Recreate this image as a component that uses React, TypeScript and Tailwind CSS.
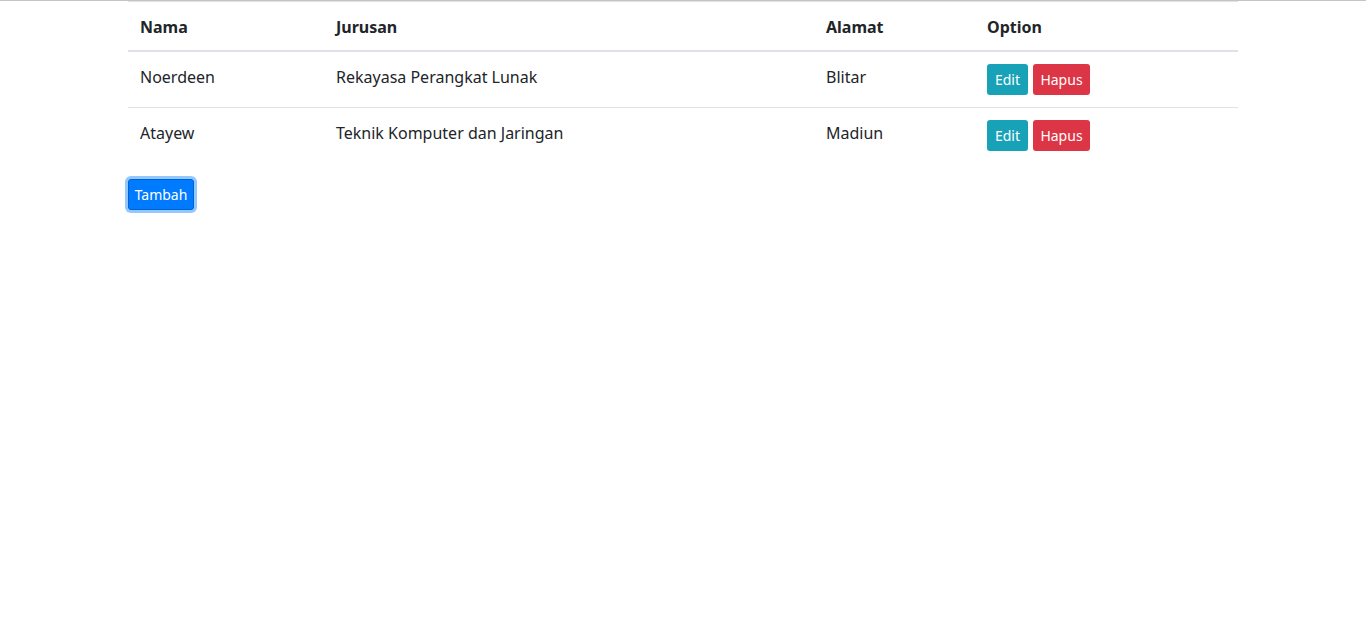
const rows = [
  { nama: 'Noerdeen', jurusan: 'Rekayasa Perangkat Lunak', alamat: 'Blitar' },
  { nama: 'Atayew', jurusan: 'Teknik Komputer dan Jaringan', alamat: 'Madiun' },
];

export default function App() {
  return (
    <div className="min-h-screen bg-white text-[#212529] text-[16px] leading-[1.5] font-['Segoe_UI','Noto_Sans',sans-serif]">
      <div className="h-px bg-[#c4c4c4]" />
      <div className="w-[1140px] mx-auto px-[15px]">
        <table className="w-[1110px] table-fixed border-collapse mb-4 border-t border-[#dee2e6]">
          <thead>
            <tr className="border-b-2 border-[#dee2e6]">
              <th className="w-[196px] px-3 pt-[13px] pb-[11px] text-left font-bold">Nama</th>
              <th className="w-[490px] px-3 pt-[13px] pb-[11px] text-left font-bold">Jurusan</th>
              <th className="w-[161px] px-3 pt-[13px] pb-[11px] text-left font-bold">Alamat</th>
              <th className="w-[263px] px-3 pt-[13px] pb-[11px] text-left font-bold">Option</th>
            </tr>
          </thead>
          <tbody>
            {rows.map((r, i) => (
              <tr key={r.nama} className={i === 0 ? 'border-b border-[#dee2e6]' : ''}>
                <td className="px-3 pt-[13px] pb-3 align-top">{r.nama}</td>
                <td className="px-3 pt-[13px] pb-3 align-top">{r.jurusan}</td>
                <td className="px-3 pt-[13px] pb-3 align-top">{r.alamat}</td>
                <td className="px-3 py-3 align-top">
                  <div className="flex gap-[5px]">
                    <button className="h-[31px] w-[41px] text-[14px] text-white bg-[#17a2b8] rounded-[3px]">Edit</button>
                    <button className="h-[31px] w-[57px] text-[14px] text-white bg-[#dc3545] rounded-[3px]">Hapus</button>
                  </div>
                </td>
              </tr>
            ))}
          </tbody>
        </table>
        <button className="h-[31px] w-[66px] text-[14px] text-white bg-[#007bff] rounded-[3px] border border-[#0062cc] shadow-[0_0_0_3px_rgba(38,143,255,0.5)]">
          Tambah
        </button>
      </div>
    </div>
  );
}
